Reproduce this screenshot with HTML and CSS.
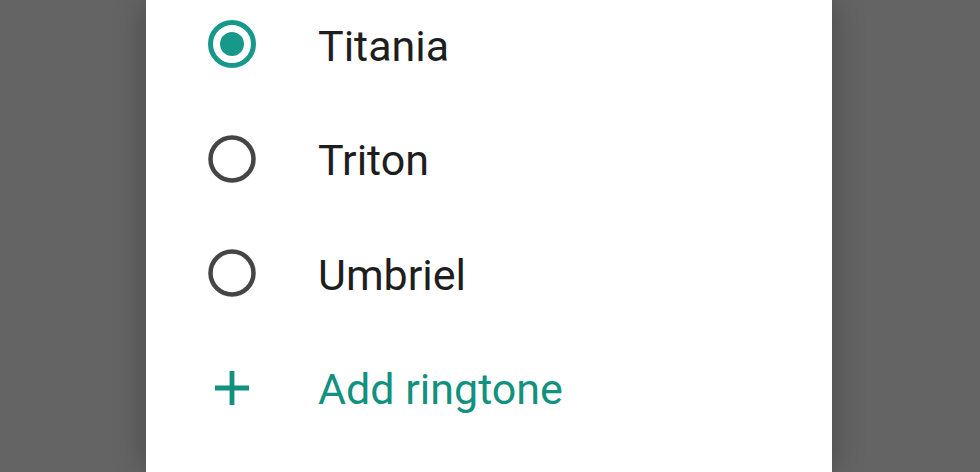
FILE: index.html
```html
<!DOCTYPE html>
<html>
<head>
<meta charset="utf-8">
<link rel="stylesheet" href="styles.css">
</head>
<body>
<div class="panel">
  <ul class="list">
    <li class="row">
      <span class="icon">
        <svg width="48" height="48" viewBox="0 0 48 48"><circle cx="24" cy="24" r="21.5" fill="none" stroke="#16998a" stroke-width="5"/><circle cx="24" cy="24" r="12" fill="#16998a"/></svg>
      </span>
      <span class="label">Titania</span>
    </li>
    <li class="row">
      <span class="icon">
        <svg width="48" height="48" viewBox="0 0 48 48"><circle cx="24" cy="24" r="21.5" fill="none" stroke="#454545" stroke-width="4.5"/></svg>
      </span>
      <span class="label">Triton</span>
    </li>
    <li class="row">
      <span class="icon">
        <svg width="48" height="48" viewBox="0 0 48 48"><circle cx="24" cy="24" r="21.5" fill="none" stroke="#454545" stroke-width="4.5"/></svg>
      </span>
      <span class="label">Umbriel</span>
    </li>
    <li class="row add">
      <span class="icon">
        <svg width="48" height="48" viewBox="0 0 48 48"><path d="M24 7v34M7 24h34" stroke="#13917f" stroke-width="4.8" fill="none"/></svg>
      </span>
      <span class="label">Add ringtone</span>
    </li>
  </ul>
</div>
</body>
</html>
```

FILE: styles.css
```css
html, body {
  margin: 0;
  padding: 0;
  height: 100%;
  overflow: hidden;
}
body {
  background: #646464;
}
.panel {
  margin-left: 146px;
  width: 686px;
  height: 472px;
  background: #ffffff;
  box-shadow: 0 0 30px rgba(0, 0, 0, 0.28);
  overflow: hidden;
}
.list {
  list-style: none;
  margin: -13px 0 0 0;
  padding: 0;
}
.row {
  display: flex;
  align-items: center;
  height: 114.5px;
  padding-left: 62px;
  gap: 62px;
}
.icon {
  width: 48px;
  height: 48px;
  display: flex;
}
.label {
  font-family: Roboto, "Noto Sans", sans-serif;
  font-size: 43px;
  color: #1e1e1e;
  line-height: 1;
  padding-top: 4px;
}
.add .label {
  color: #13917f;
}
```
